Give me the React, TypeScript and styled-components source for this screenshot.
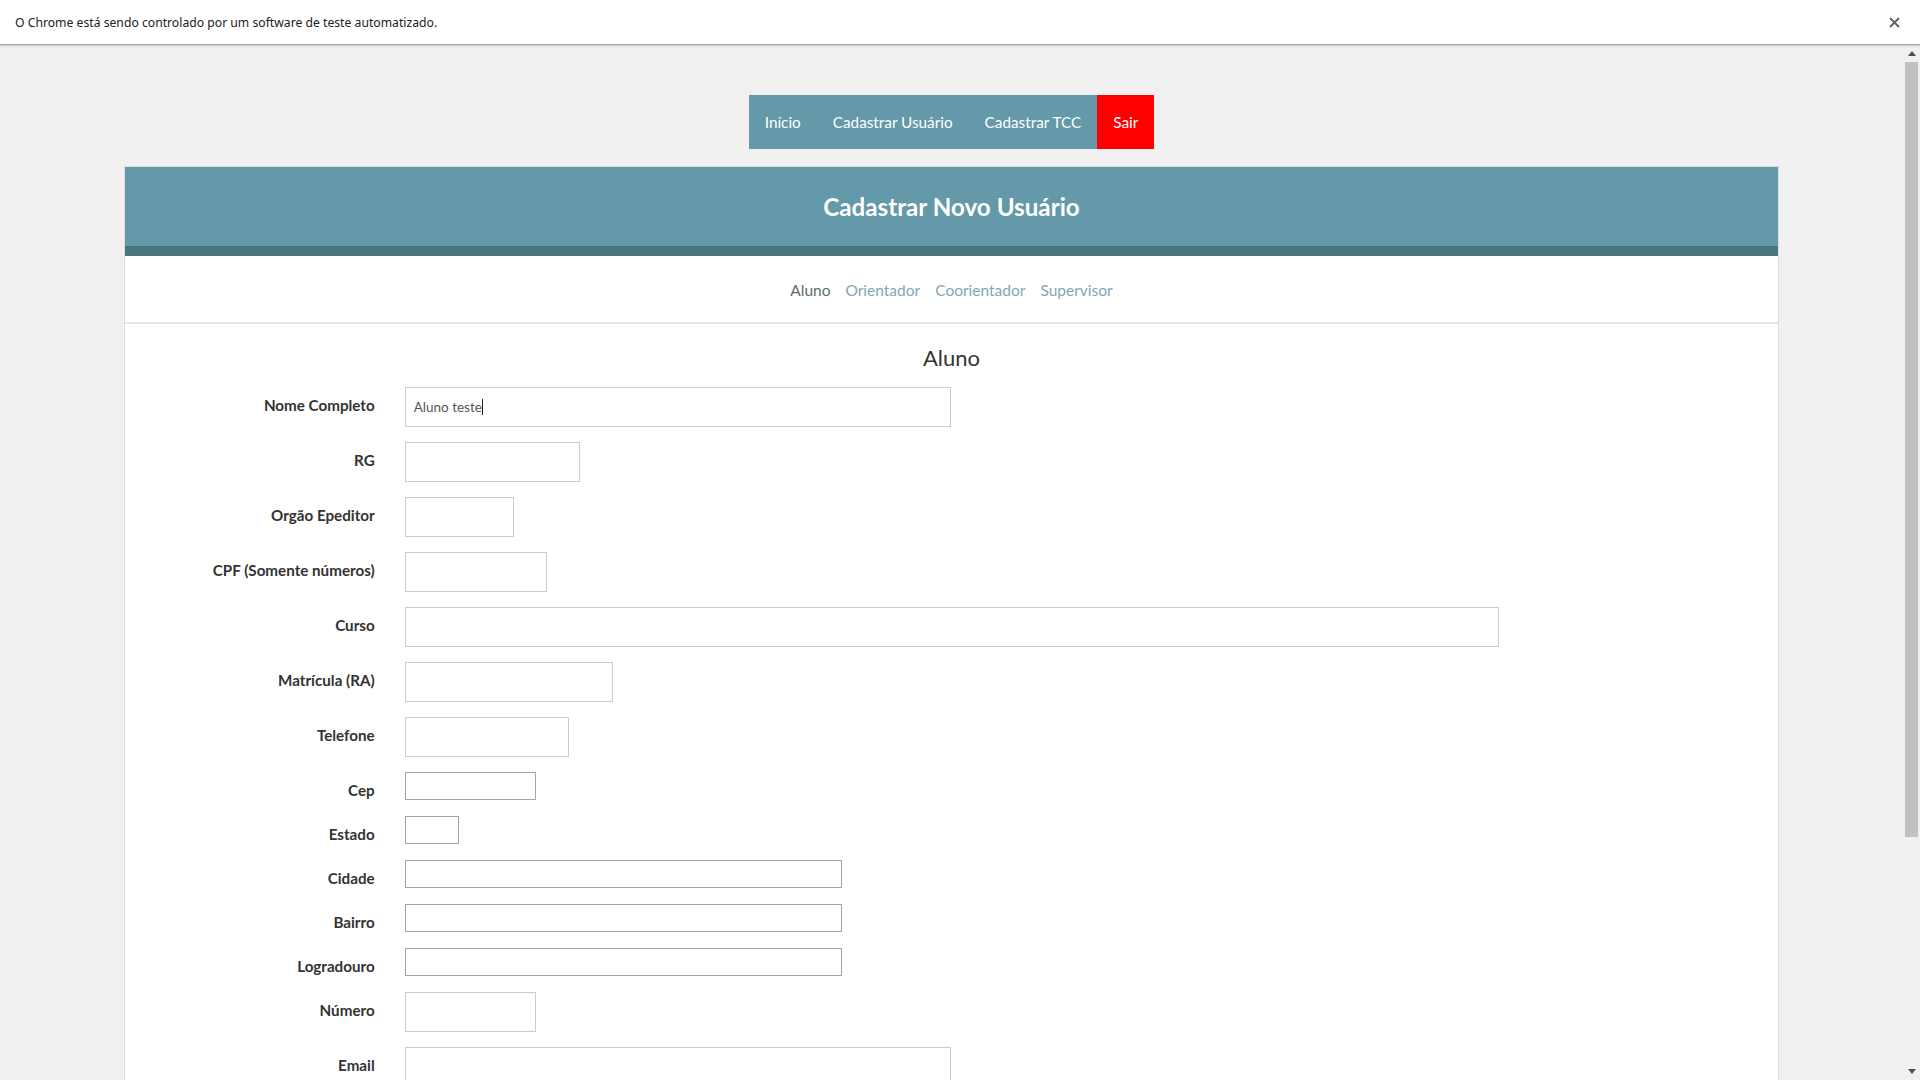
import React from "react";
import styled, { createGlobalStyle } from "styled-components";

const GlobalStyle = createGlobalStyle`
  html, body {
    margin: 0;
    padding: 0;
    height: 100%;
    overflow: hidden;
  }
  body {
    font-family: Lato, "Noto Sans", Arial, sans-serif;
    background: #f0f0f0;
  }
  * { box-sizing: border-box; }
`;

const Screen = styled.div`
  display: flex;
  flex-direction: column;
  height: 100vh;
`;

const InfoBar = styled.div`
  flex: none;
  height: 45px;
  background: #ffffff;
  border-bottom: 1px solid #a3a3a3;
  box-shadow: 0 1px 2px rgba(0, 0, 0, 0.18);
  display: flex;
  align-items: center;
  justify-content: space-between;
  padding: 0 16px 0 15px;
  position: relative;
  z-index: 2;
`;

const InfoText = styled.span`
  font-family: "Noto Sans", "Open Sans", sans-serif;
  font-size: 12.2px;
  color: #202124;
`;

const CloseButton = styled.button`
  border: none;
  background: none;
  padding: 0;
  width: 14px;
  height: 14px;
  display: flex;
  align-items: center;
  justify-content: center;
  margin-right: 3px;
`;

const Viewport = styled.div`
  flex: 1;
  min-height: 0;
  display: flex;
`;

const Page = styled.div`
  flex: 1;
  min-width: 0;
  overflow: hidden;
  background: #f0f0f0;
`;

const TopNav = styled.nav`
  display: flex;
  justify-content: center;
  padding-top: 50px;
`;

const NavList = styled.ul`
  display: flex;
  margin: 0;
  padding: 0;
  list-style: none;
  background: #6399a8;
`;

const NavItem = styled.li<{ $danger?: boolean }>`
  height: 54px;
  line-height: 54px;
  padding: 0 16px;
  font-size: 15.3px;
  color: #ffffff;
  background: ${(p) => (p.$danger ? "#ff0000" : "transparent")};
  cursor: pointer;
`;

const Container = styled.main`
  width: 87%;
  margin: 17px auto 0;
  background: #ffffff;
  border: 1px solid #dcdcdc;
  border-bottom: none;
`;

const Header = styled.header`
  height: 89px;
  background: #6399a8;
  border-bottom: 10px solid #4a7380;
  display: flex;
  align-items: center;
  justify-content: center;
`;

const Title = styled.h1`
  margin: 0;
  font-size: 24.2px;
  font-weight: 700;
  color: #ffffff;
`;

const Tabs = styled.div`
  height: 68px;
  padding-top: 2px;
  border-bottom: 2px solid #e4e4e4;
  display: flex;
  align-items: center;
  justify-content: center;
  gap: 15px;
`;

const Tab = styled.a<{ $active?: boolean }>`
  font-size: 15.5px;
  color: ${(p) => (p.$active ? "#5d6d72" : "#82a7b2")};
  text-decoration: none;
  cursor: pointer;
`;

const FormTitle = styled.h2`
  margin: 21px 0 16px;
  text-align: center;
  font-size: 22px;
  line-height: 26px;
  font-weight: 400;
  color: #333333;
`;

const Form = styled.form`
  display: flex;
  flex-direction: column;
`;

const Row = styled.div<{ $small?: boolean }>`
  display: grid;
  grid-template-columns: 250px auto;
  column-gap: 30px;
  align-items: start;
  margin-bottom: ${(p) => (p.$small ? 7 : 15)}px;
`;

const Label = styled.label`
  text-align: right;
  font-size: 15.2px;
  font-weight: 700;
  line-height: 37px;
  color: #333333;
`;

const InputBox = styled.div`
  position: relative;
  display: flex;
`;

const Input = styled.input<{ $w: number; $small?: boolean }>`
  width: ${(p) => p.$w}px;
  height: ${(p) => (p.$small ? 28 : 40)}px;
  border: 1px solid ${(p) => (p.$small ? "#a5a5a5" : "#cccccc")};
  border-radius: 0;
  padding: 0 8px;
  font-family: Lato, sans-serif;
  font-size: 13.5px;
  color: #555555;
  background: #ffffff;
  outline: none;
`;

const Caret = styled.span`
  position: absolute;
  left: 77px;
  top: 12px;
  width: 1px;
  height: 16px;
  background: #222222;
`;

const ScrollBar = styled.div`
  flex: none;
  width: 17px;
  background: #f1f1f1;
  display: flex;
  flex-direction: column;
`;

const ScrollButton = styled.div`
  height: 17px;
  display: flex;
  align-items: center;
  justify-content: center;
`;

const ScrollTrack = styled.div`
  flex: 1;
  padding: 0 2px;
`;

const ScrollThumb = styled.div`
  height: 775px;
  background: #c1c1c1;
`;

type Field = { label: string; w: number; small?: boolean; value?: string };

const fields: Field[] = [
  { label: "Nome Completo", w: 546, value: "Aluno teste" },
  { label: "RG", w: 175 },
  { label: "Orgão Epeditor", w: 109 },
  { label: "CPF (Somente números)", w: 142 },
  { label: "Curso", w: 1094 },
  { label: "Matrícula (RA)", w: 208 },
  { label: "Telefone", w: 164 },
  { label: "Cep", w: 131, small: true },
  { label: "Estado", w: 54, small: true },
  { label: "Cidade", w: 437, small: true },
  { label: "Bairro", w: 437, small: true },
  { label: "Logradouro", w: 437, small: true },
  { label: "Número", w: 131 },
  { label: "Email", w: 546 },
];

export default function App() {
  return (
    <Screen>
      <GlobalStyle />
      <InfoBar>
        <InfoText>O Chrome está sendo controlado por um software de teste automatizado.</InfoText>
        <CloseButton aria-label="Fechar">
          <svg width="11" height="11" viewBox="0 0 11 11">
            <path d="M1 1 L10 10 M10 1 L1 10" stroke="#5f6368" strokeWidth="1.8" />
          </svg>
        </CloseButton>
      </InfoBar>
      <Viewport>
        <Page>
          <TopNav>
            <NavList>
              <NavItem>Início</NavItem>
              <NavItem>Cadastrar Usuário</NavItem>
              <NavItem>Cadastrar TCC</NavItem>
              <NavItem $danger>Sair</NavItem>
            </NavList>
          </TopNav>
          <Container>
            <Header>
              <Title>Cadastrar Novo Usuário</Title>
            </Header>
            <Tabs>
              <Tab $active>Aluno</Tab>
              <Tab>Orientador</Tab>
              <Tab>Coorientador</Tab>
              <Tab>Supervisor</Tab>
            </Tabs>
            <FormTitle>Aluno</FormTitle>
            <Form>
              {fields.map((f) => (
                <Row key={f.label} $small={f.small}>
                  <Label>{f.label}</Label>
                  <InputBox>
                    <Input $w={f.w} $small={f.small} defaultValue={f.value} readOnly />
                    {f.value ? <Caret /> : null}
                  </InputBox>
                </Row>
              ))}
            </Form>
          </Container>
        </Page>
        <ScrollBar>
          <ScrollButton>
            <svg width="8" height="5" viewBox="0 0 8 5">
              <path d="M0 5 L4 0 L8 5 Z" fill="#505050" />
            </svg>
          </ScrollButton>
          <ScrollTrack>
            <ScrollThumb />
          </ScrollTrack>
          <ScrollButton>
            <svg width="8" height="5" viewBox="0 0 8 5">
              <path d="M0 0 L8 0 L4 5 Z" fill="#505050" />
            </svg>
          </ScrollButton>
        </ScrollBar>
      </Viewport>
    </Screen>
  );
}
